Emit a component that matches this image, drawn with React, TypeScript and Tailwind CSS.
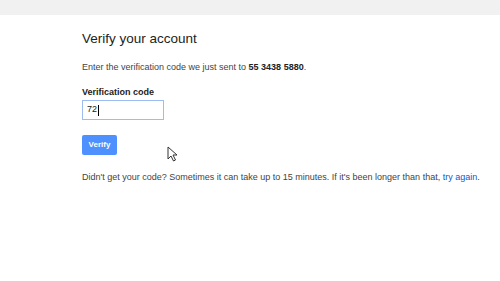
export default function App() {
  return (
    <div className="relative h-[281px] w-[500px] overflow-hidden bg-white font-['Liberation_Sans',Arial,sans-serif] text-[#222]">
      <div className="h-[15px] bg-[#f1f1f1]" />
      <section className="pl-[82px] pt-[16px]">
        <h1 className="text-[13.5px] leading-[16px] text-[#222]">Verify your account</h1>
        <p className="mt-[14px] text-[9px] leading-[12px] text-[#444]">
          Enter the verification code we just sent to <span className="font-bold text-[#222]">55 3438 5880</span>.
        </p>
        <label className="mt-[13px] block text-[9px] font-bold leading-[12px] text-[#222]">Verification code</label>
        <div className="mt-[2px] flex h-[20px] w-[82px] items-center border border-[#9dbcef] px-[4px] text-[9px] text-[#222]">
          72<span className="ml-px h-[11px] w-px bg-black" />
        </div>
        <button className="mt-[15px] flex h-[20px] w-[35px] items-center justify-center rounded-[2px] bg-[#4d90fe] text-[8px] font-bold text-white">
          Verify
        </button>
        <p className="mt-[16px] text-[9px] leading-[12px] text-[#444]">
          Didn't get your code? Sometimes it can take up to 15 minutes. If it's been longer than that,{' '}
          <a className="text-[#15c]">try again</a>.
        </p>
      </section>
      <svg className="absolute left-[167px] top-[146px]" width="12" height="16" viewBox="0 0 12 16">
        <path d="M1 1 L1 13 L4 10 L6.5 15 L8.5 14 L6 9 L10 9 Z" fill="white" stroke="#333" strokeWidth="1" />
      </svg>
    </div>
  )
}
